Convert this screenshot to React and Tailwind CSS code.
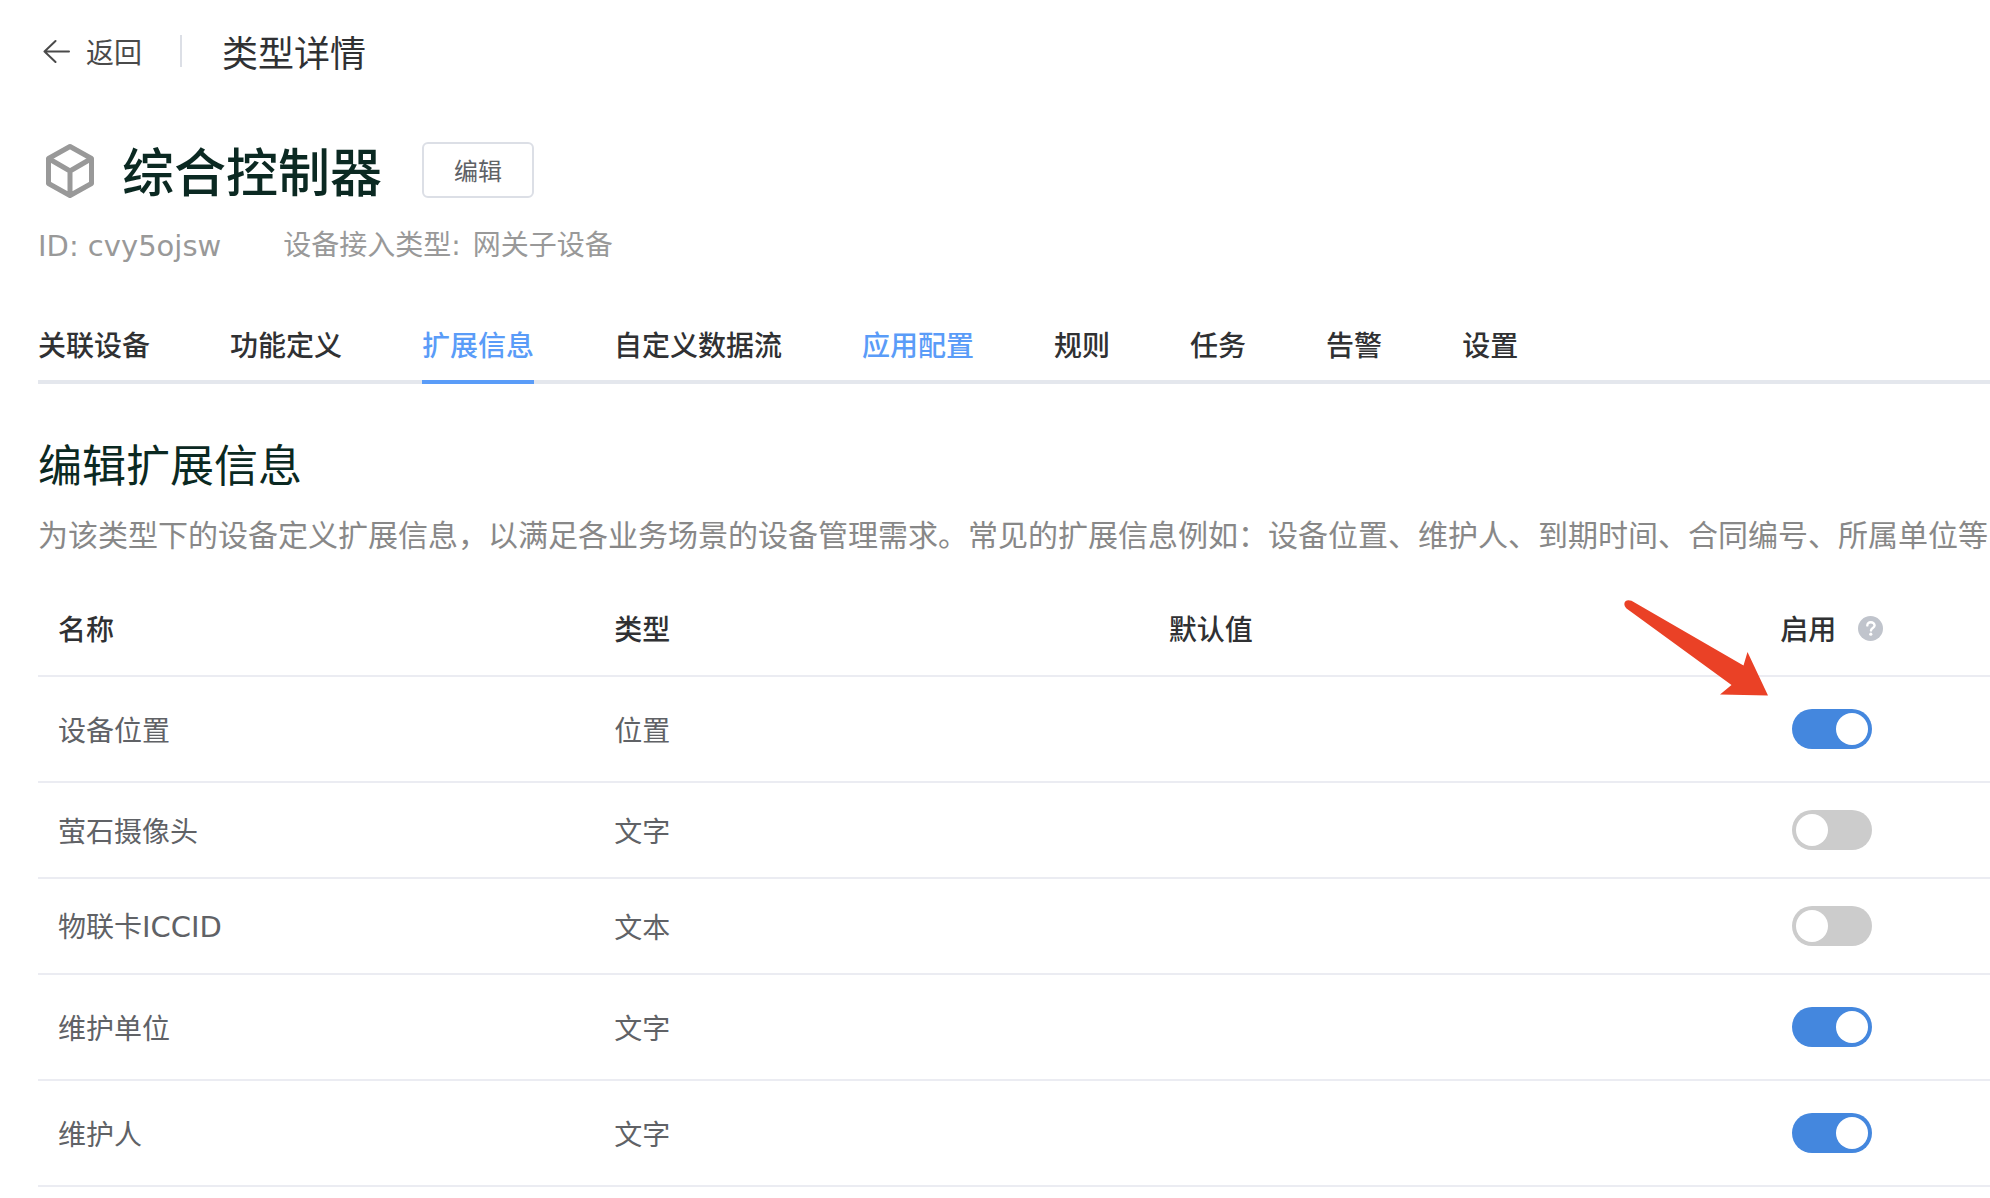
import { useState } from "react";

const tabs = [
  { label: "关联设备" },
  { label: "功能定义" },
  { label: "扩展信息", active: true },
  { label: "自定义数据流" },
  { label: "应用配置", highlighted: true },
  { label: "规则" },
  { label: "任务" },
  { label: "告警" },
  { label: "设置" },
];

const fields = [
  { name: "设备位置", type: "位置", enabled: true, tall: true },
  { name: "萤石摄像头", type: "文字", enabled: false },
  { name: "物联卡", latin: "ICCID", type: "文本", enabled: false },
  { name: "维护单位", type: "文字", enabled: true, tall: true },
  { name: "维护人", type: "文字", enabled: true, tall: true },
];

function BackIcon() {
  return (
    <svg className="h-6 w-7" viewBox="0 0 28 24" fill="none" stroke="currentColor" strokeWidth="2" strokeLinecap="round" strokeLinejoin="round" aria-hidden="true">
      <path d="M27 12.500H2.500M13.500 2 2.500 12.500l11 10.500" />
    </svg>
  );
}

function CubeIcon() {
  return (
    <svg className="h-14 w-12 text-[#999999]" viewBox="0 0 48 56" fill="none" stroke="currentColor" strokeWidth="5" strokeLinejoin="round" aria-hidden="true">
      <path d="M24 4.500 45.500 16.500V41.500L24 53.500 2.500 41.500V16.500ZM2.500 16.500 24 29 45.500 16.500M24 29V53.500" />
    </svg>
  );
}

function HelpIcon() {
  return (
    <svg className="size-[25px]" viewBox="0 0 25 25" fill="none" aria-hidden="true">
      <circle cx="12.5" cy="12.5" r="12.5" fill="#c0c4cc" />
      <path d="M9.300 9.400C9.300 7.400 10.700 6.200 12.800 6.200s3.800 1.300 3.800 3.200c0 2.500-3.600 2.600-3.600 5" stroke="#fff" strokeWidth="2.400" strokeLinecap="round" />
      <circle cx="12.800" cy="18.200" r="1.600" fill="#fff" />
    </svg>
  );
}

function PointerArrow() {
  return (
    <svg className="pointer-events-none absolute right-full top-1/2 -mt-7 mr-3 h-24 w-36" viewBox="0 0 144 96" aria-hidden="true">
      <path d="M7.500 .8 119.500 65.500 123.500 52 144 95.500 96 94.500 107.500 85 2.500 8.500C-2 4 1-1.500 7.500 .8Z" fill="#ea4126" />
    </svg>
  );
}

function Switch({ label, initial }) {
  const [on, setOn] = useState(initial);
  return (
    <input
      type="checkbox"
      role="switch"
      aria-label={label}
      checked={on}
      onChange={(e) => setOn(e.target.checked)}
      className="block mx-auto h-10 w-20 cursor-pointer appearance-none rounded-full bg-[#cccccc] p-1 before:block before:size-8 before:rounded-full before:bg-white before:content-[''] checked:bg-[#4487de] checked:before:translate-x-10"
    />
  );
}

export default function App() {
  return (
    <main className="min-h-screen overflow-hidden bg-white pl-[38px] font-['Noto_Sans_CJK_SC',sans-serif] text-[28px] leading-10 text-[#303133]">
      <header className="flex h-[102px] items-center">
        <button type="button" className="flex cursor-pointer items-center gap-4 pl-1 text-[#4a4a4a]">
          <BackIcon />
          <span>返回</span>
        </button>
        <span className="ml-[38px] h-8 w-0.5 bg-[#dcdfe6]" />
        <p className="ml-10 text-[36px]">类型详情</p>
      </header>

      <section className="pt-[38px]">
        <div className="flex items-center">
          <span className="pl-2"><CubeIcon /></span>
          <h1 className="ml-7 text-[52px] leading-[60px] font-medium text-[#0b2922]">综合控制器</h1>
          <button type="button" className="ml-10 h-14 w-28 cursor-pointer rounded-md border-2 border-[#dcdfe6] text-[24px] leading-8 text-[#606266]">
            编辑
          </button>
        </div>
        <div className="mt-[26px] flex gap-[62px] font-['DejaVu_Sans','Noto_Sans_CJK_SC',sans-serif] text-[#999999]">
          <p className="text-[29px]">ID: cvy5ojsw</p>
          <p className="flex gap-3"><span>设备接入类型:</span><span>网关子设备</span></p>
        </div>
      </section>

      <nav className="mt-[58px] flex gap-20 border-b-4 border-[#e4e7ed] font-medium">
        {tabs.map((tab) => (
          <a
            key={tab.label}
            href="#"
            aria-current={tab.active ? "page" : undefined}
            className={
              tab.active
                ? "-mb-1 border-b-4 border-[#5a9cf8] pb-4 text-[#5a9cf8]"
                : tab.highlighted
                  ? "pb-4 text-[#5a9cf8]"
                  : "pb-4"
            }
          >
            {tab.label}
          </a>
        ))}
      </nav>

      <section className="pt-[49px]">
        <h2 className="text-[44px] leading-[60px] text-[#0b2922]">编辑扩展信息</h2>
        <p className="mt-5 whitespace-nowrap text-[30px] text-[#888888]">
          为该类型下的设备定义扩展信息，以满足各业务场景的设备管理需求。常见的扩展信息例如：设备位置、维护人、到期时间、合同编号、所属单位等
        </p>
        <table className="mt-7 w-full table-fixed border-collapse text-left">
          <colgroup>
            <col className="w-[28.5%]" />
            <col className="w-[28.4%]" />
            <col className="w-[28.4%]" />
            <col className="w-[13.2%]" />
            <col />
          </colgroup>
          <thead>
            <tr className="h-[95px] border-b-2 border-[#ebecf2]">
              <th className="px-5 font-medium">名称</th>
              <th className="px-5 font-medium">类型</th>
              <th className="px-5 font-medium">默认值</th>
              <th className="font-medium">
                <div className="relative mx-auto flex w-fit items-center gap-[22px]">
                  启用
                  <HelpIcon />
                  <PointerArrow />
                </div>
              </th>
              <td />
            </tr>
          </thead>
          <tbody className="text-[#606266]">
            {fields.map((f) => (
              <tr key={f.name} className={f.tall ? "h-[106px] border-b-2 border-[#ebecf2]" : "h-24 border-b-2 border-[#ebecf2]"}>
                <td className="px-5">
                  {f.name}
                  {f.latin && <span className="font-['DejaVu_Sans',sans-serif] text-[29px]">{f.latin}</span>}
                </td>
                <td className="px-5">{f.type}</td>
                <td className="px-5" />
                <td>
                  <Switch label={"启用" + f.name + (f.latin || "")} initial={f.enabled} />
                </td>
                <td />
              </tr>
            ))}
          </tbody>
        </table>
      </section>
    </main>
  );
}
